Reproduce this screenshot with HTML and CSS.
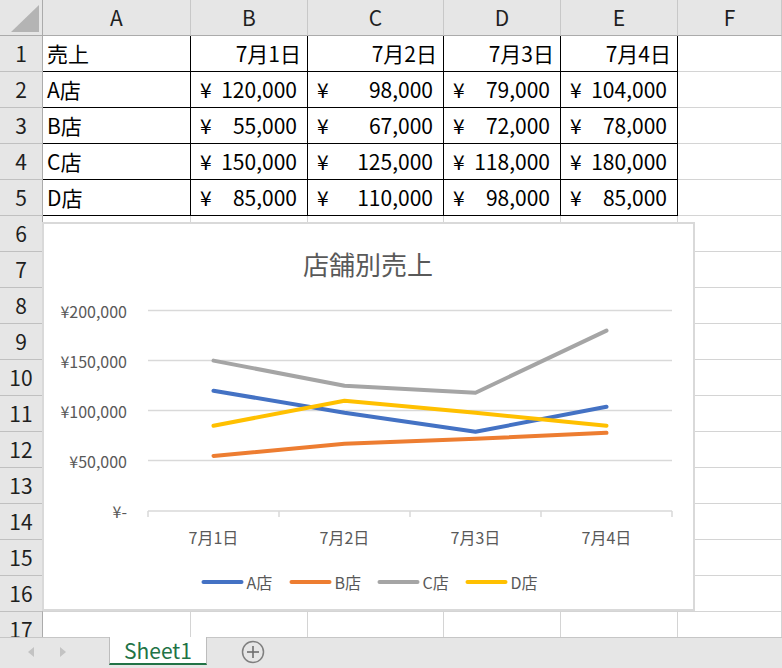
FILE: index.html
```html
<!DOCTYPE html>
<html lang="ja">
<head>
<meta charset="utf-8">
<title>Sheet1</title>
<link rel="stylesheet" href="styles.css">
</head>
<body>
<div class="app">
  <div class="sheet">
    <div class="grid">
      <div class="corner"><svg width="42" height="35" viewBox="0 0 42 35"><polygon points="11,32 39,32 39,5" fill="#b4b4b4"/></svg></div>
      <div class="hd">A</div><div class="hd">B</div><div class="hd">C</div><div class="hd">D</div><div class="hd">E</div><div class="hd">F</div>

      <div class="rh">1</div>
      <div class="t tl">売上</div><div class="t tr">7月1日</div><div class="t tr">7月2日</div><div class="t tr">7月3日</div><div class="t tr">7月4日</div><div></div>

      <div class="rh">2</div>
      <div class="t tl">A店</div>
      <div class="t acc"><span>¥</span><span>120,000</span></div>
      <div class="t acc"><span>¥</span><span>98,000</span></div>
      <div class="t acc"><span>¥</span><span>79,000</span></div>
      <div class="t acc"><span>¥</span><span>104,000</span></div>
      <div></div>

      <div class="rh">3</div>
      <div class="t tl">B店</div>
      <div class="t acc"><span>¥</span><span>55,000</span></div>
      <div class="t acc"><span>¥</span><span>67,000</span></div>
      <div class="t acc"><span>¥</span><span>72,000</span></div>
      <div class="t acc"><span>¥</span><span>78,000</span></div>
      <div></div>

      <div class="rh">4</div>
      <div class="t tl">C店</div>
      <div class="t acc"><span>¥</span><span>150,000</span></div>
      <div class="t acc"><span>¥</span><span>125,000</span></div>
      <div class="t acc"><span>¥</span><span>118,000</span></div>
      <div class="t acc"><span>¥</span><span>180,000</span></div>
      <div></div>

      <div class="rh">5</div>
      <div class="t tl">D店</div>
      <div class="t acc"><span>¥</span><span>85,000</span></div>
      <div class="t acc"><span>¥</span><span>110,000</span></div>
      <div class="t acc"><span>¥</span><span>98,000</span></div>
      <div class="t acc"><span>¥</span><span>85,000</span></div>
      <div></div>

      <div class="rh">6</div><div></div><div></div><div></div><div></div><div></div><div></div>
      <div class="rh">7</div><div></div><div></div><div></div><div></div><div></div><div></div>
      <div class="rh">8</div><div></div><div></div><div></div><div></div><div></div><div></div>
      <div class="rh">9</div><div></div><div></div><div></div><div></div><div></div><div></div>
      <div class="rh">10</div><div></div><div></div><div></div><div></div><div></div><div></div>
      <div class="rh">11</div><div></div><div></div><div></div><div></div><div></div><div></div>
      <div class="rh">12</div><div></div><div></div><div></div><div></div><div></div><div></div>
      <div class="rh">13</div><div></div><div></div><div></div><div></div><div></div><div></div>
      <div class="rh">14</div><div></div><div></div><div></div><div></div><div></div><div></div>
      <div class="rh">15</div><div></div><div></div><div></div><div></div><div></div><div></div>
      <div class="rh">16</div><div></div><div></div><div></div><div></div><div></div><div></div>
      <div class="rh">17</div><div></div><div></div><div></div><div></div><div></div><div></div>
    </div>

    <div class="chart">
      <svg class="chart-svg" width="649" height="385" viewBox="44 224 649 385">
        <text class="title" x="368" y="263">店舗別売上</text>
        <g class="gridlines">
          <line x1="148" y1="310.5" x2="672" y2="310.5"/>
          <line x1="148" y1="360.5" x2="672" y2="360.5"/>
          <line x1="148" y1="410.5" x2="672" y2="410.5"/>
          <line x1="148" y1="460.5" x2="672" y2="460.5"/>
          <line x1="148" y1="511" x2="672" y2="511"/>
          <line x1="148" y1="511" x2="148" y2="517"/>
          <line x1="279" y1="511" x2="279" y2="517"/>
          <line x1="410" y1="511" x2="410" y2="517"/>
          <line x1="541" y1="511" x2="541" y2="517"/>
          <line x1="672" y1="511" x2="672" y2="517"/>
        </g>
        <g class="ylab">
          <text x="127" y="310.5">¥200,000</text>
          <text x="127" y="360.5">¥150,000</text>
          <text x="127" y="410.5">¥100,000</text>
          <text x="127" y="460.5">¥50,000</text>
          <text x="127" y="511">¥-</text>
        </g>
        <g class="xlab">
          <text x="213.5" y="537">7月1日</text>
          <text x="344.5" y="537">7月2日</text>
          <text x="475.5" y="537">7月3日</text>
          <text x="606.5" y="537">7月4日</text>
        </g>
        <g class="series">
          <polyline class="s-a" points="213.5,390.7 344.5,412.8 475.5,431.8 606.5,406.7"/>
          <polyline class="s-b" points="213.5,455.9 344.5,443.8 475.5,438.8 606.5,432.8"/>
          <polyline class="s-c" points="213.5,360.6 344.5,385.7 475.5,392.7 606.5,330.6"/>
          <polyline class="s-d" points="213.5,425.8 344.5,400.7 475.5,412.8 606.5,425.8"/>
        </g>
        <g class="legend">
          <line class="s-a" x1="203.5" y1="582" x2="241.5" y2="582"/>
          <text x="246.5" y="582">A店</text>
          <line class="s-b" x1="291.5" y1="582" x2="329.5" y2="582"/>
          <text x="334.5" y="582">B店</text>
          <line class="s-c" x1="379.5" y1="582" x2="417.5" y2="582"/>
          <text x="422.5" y="582">C店</text>
          <line class="s-d" x1="467.5" y1="582" x2="505.5" y2="582"/>
          <text x="510.5" y="582">D店</text>
        </g>
      </svg>
    </div>
  </div>

  <div class="tabs">
    <div class="nav">
      <svg width="108" height="30" viewBox="0 0 108 30"><polygon points="34,10 34,20 28,15" fill="#c3c3c3"/><polygon points="60,10 60,20 66,15" fill="#c3c3c3"/></svg>
    </div>
    <div class="tab">Sheet1</div>
    <div class="add">
      <svg width="24" height="24" viewBox="0 0 24 24"><circle cx="12" cy="12" r="10.5" fill="none" stroke="#7f7f7f" stroke-width="1.5"/><line x1="12" y1="6" x2="12" y2="18" stroke="#6f6f6f" stroke-width="1.6"/><line x1="6" y1="12" x2="18" y2="12" stroke="#6f6f6f" stroke-width="1.6"/></svg>
    </div>
  </div>
</div>
</body>
</html>
```

FILE: styles.css
```css
* { box-sizing: border-box; }

body {
  margin: 0;
  overflow: hidden;
  background: #fff;
  font-family: "Noto Sans CJK JP", "Noto Sans", sans-serif;
}

.app {
  width: 782px;
  height: 668px;
  display: flex;
  flex-direction: column;
  overflow: hidden;
}

.sheet {
  position: relative;
  flex: none;
  height: 637px;
  overflow: hidden;
}

.grid {
  display: grid;
  grid-template-columns: 43px 148px 117px 136px 117px 117px 104px;
  grid-auto-rows: 36px;
}

.grid > div {
  display: flex;
  align-items: center;
  border-right: 1px solid #d4d4d4;
  border-bottom: 1px solid #d4d4d4;
  font-size: 21px;
  line-height: 1;
  color: #000;
  white-space: nowrap;
}

.grid > .corner {
  background: #e6e6e6;
  border-right-color: #ababab;
  border-bottom-color: #ababab;
}

.grid > .hd {
  background: #e6e6e6;
  justify-content: center;
  color: #1f1f1f;
  border-right-color: #c8c8c8;
  border-bottom-color: #ababab;
}

.grid > .rh {
  background: #e6e6e6;
  justify-content: center;
  color: #1f1f1f;
  border-right-color: #ababab;
  border-bottom-color: #c0c0c0;
}

.grid > .t {
  border-right-color: #000;
  border-bottom-color: #000;
}

.grid > .tl {
  padding-left: 4px;
}

.grid > .tr {
  justify-content: flex-end;
  padding-right: 6px;
}

.grid > .acc {
  justify-content: space-between;
  padding: 0 10px 0 9px;
}

.chart {
  position: absolute;
  left: 42px;
  top: 222px;
  width: 653px;
  height: 389px;
  background: #fff;
  border: 2px solid #d9d9d9;
}

.chart-svg {
  display: block;
}

.chart-svg text {
  font-family: "Noto Sans CJK JP", "Noto Sans", sans-serif;
  fill: #595959;
  font-size: 16px;
  dominant-baseline: central;
}

.chart-svg .title {
  font-size: 26px;
  text-anchor: middle;
}

.ylab text { text-anchor: end; }
.xlab text { text-anchor: middle; }

.gridlines line {
  stroke: #d9d9d9;
  stroke-width: 1.5;
}

.series polyline,
.legend line {
  fill: none;
  stroke-width: 4;
  stroke-linecap: round;
  stroke-linejoin: round;
}

.s-a { stroke: #4472c4; }
.s-b { stroke: #ed7d31; }
.s-c { stroke: #a5a5a5; }
.s-d { stroke: #ffc000; }

.tabs {
  flex: none;
  height: 31px;
  display: flex;
  align-items: stretch;
  background: #e6e6e6;
  border-top: 1px solid #c6c6c6;
  padding-bottom: 3px;
}

.nav {
  width: 109px;
  display: flex;
  align-items: center;
}

.tab {
  width: 98px;
  margin-top: -1px;
  background: #fff;
  border-left: 1px solid #bdbdbd;
  border-right: 1px solid #bdbdbd;
  border-bottom: 2px solid #217346;
  color: #217346;
  font-size: 21px;
  display: flex;
  align-items: center;
  justify-content: center;
  line-height: 1;
}

.add {
  margin-left: 34px;
  display: flex;
  align-items: center;
}
```
